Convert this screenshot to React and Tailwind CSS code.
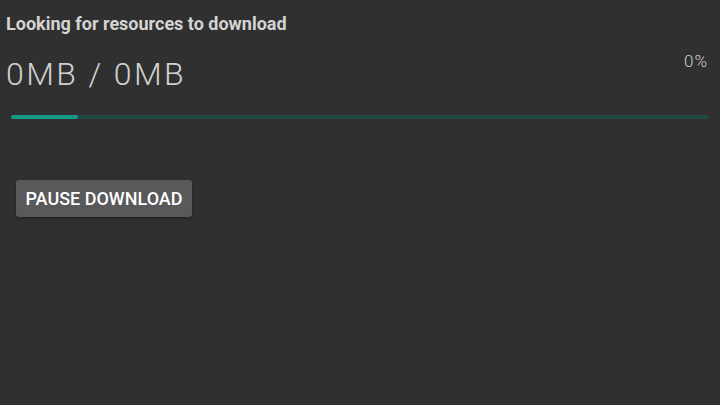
export default function App() {
  return (
    <div className="h-[405px] w-[720px] bg-[#303030] font-['Roboto',sans-serif] text-[#d6d6d6]">
      <div className="px-[6px] pt-[13px]">
        <h1 className="text-[18px] font-bold leading-[22px] text-[#d4d4d4]">Looking for resources to download</h1>
        <div className="mt-[19px] flex items-start justify-between pr-[6px]">
          <p className="text-[32px] font-light leading-[40px] tracking-[2.4px] text-[#d0d0d0]">0MB / 0MB</p>
          <span className="mt-[-5px] text-[17px] font-light tracking-[1px] text-[#cfcfcf]">0%</span>
        </div>
        <div className="mx-[5px] mt-[21px] h-[4px] w-[698px] rounded-full bg-[#214a44]">
          <div className="h-full w-[67px] rounded-full bg-[#17998a]" />
        </div>
        <button className="ml-[10px] mt-[61px] h-[37px] w-[176px] rounded-[3px] bg-[#59595b] text-[18px] font-medium text-white shadow-[0_1px_3px_rgba(0,0,0,0.4)]">
          PAUSE DOWNLOAD
        </button>
      </div>
    </div>
  );
}
